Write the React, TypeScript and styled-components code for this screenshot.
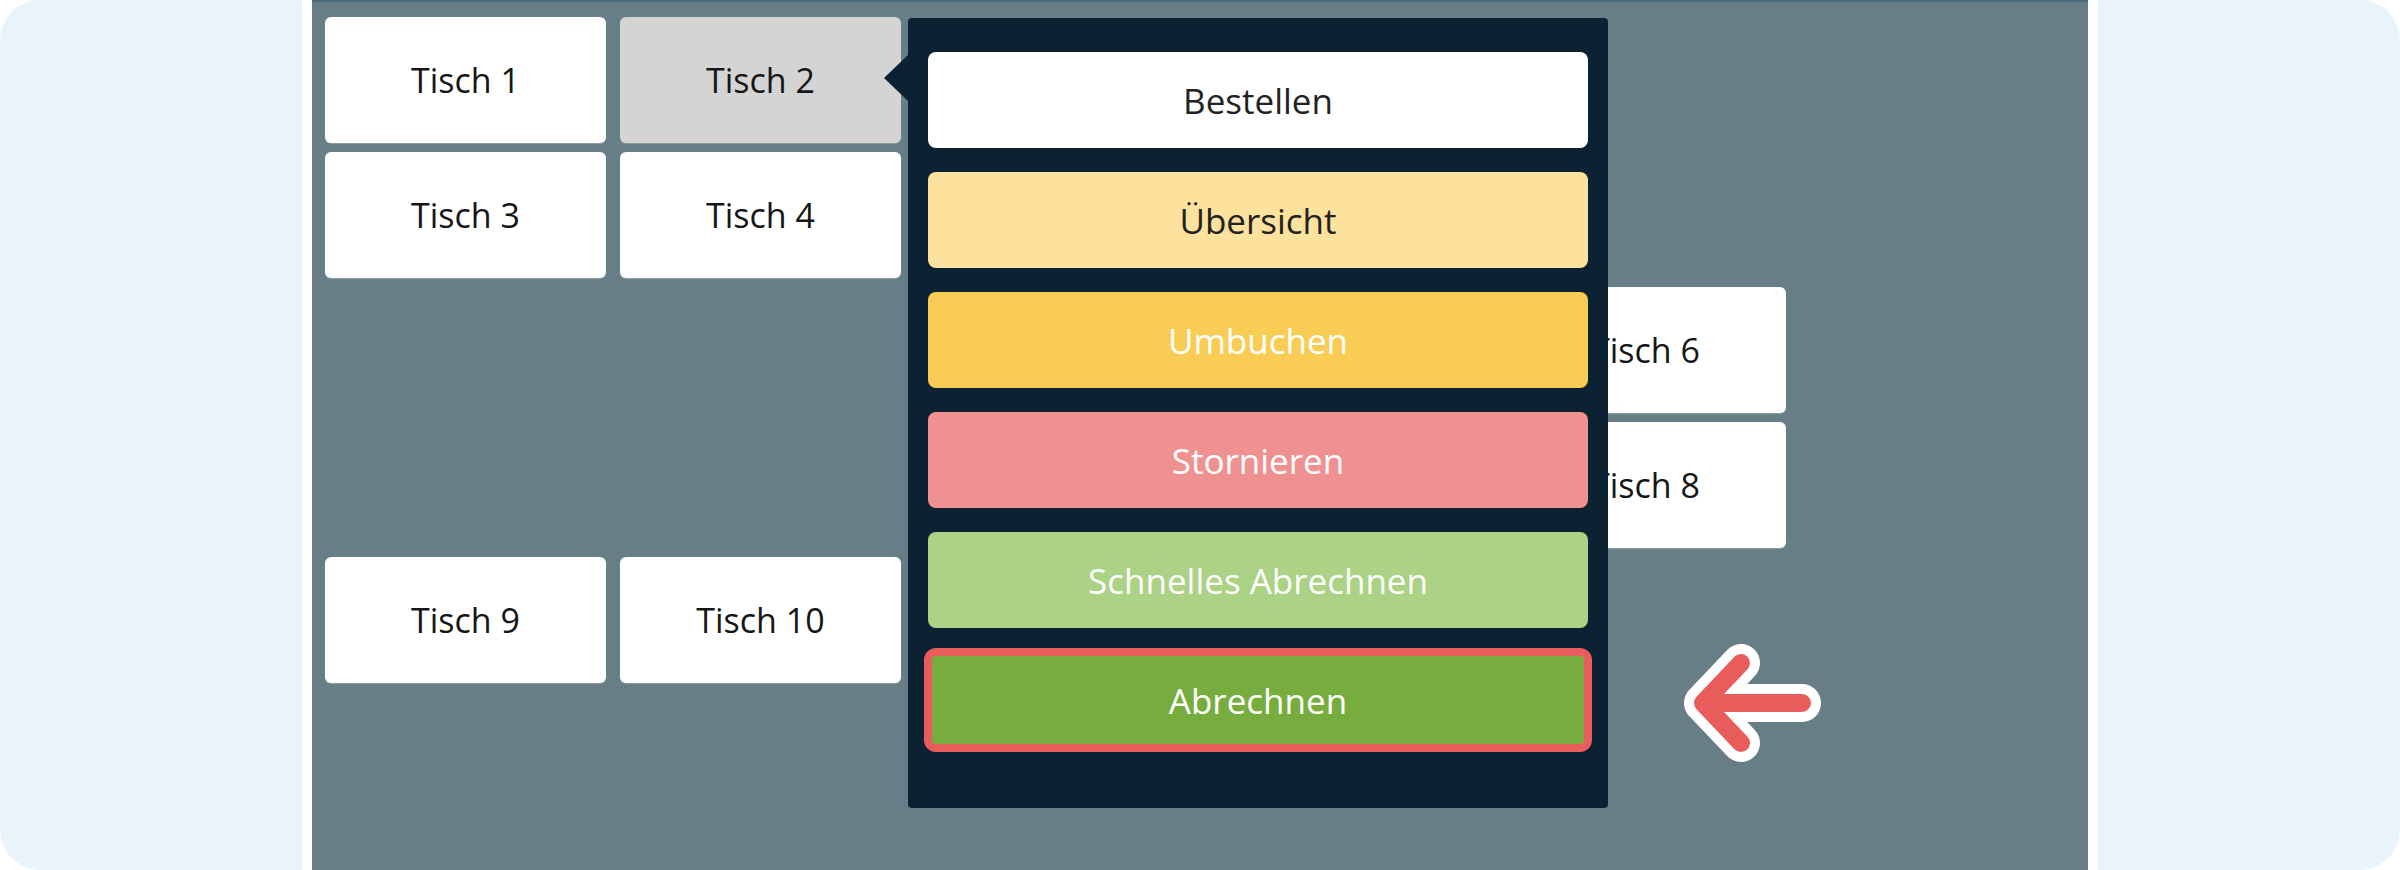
import styled, { createGlobalStyle } from "styled-components";

const GlobalStyle = createGlobalStyle`
  html, body {
    margin: 0;
    padding: 0;
    background: #ffffff;
  }
  body {
    font-family: "Open Sans", "Noto Sans", sans-serif;
  }
`;

const Frame = styled.div`
  width: 2400px;
  height: 870px;
  background: #e8f3fa;
  border-radius: 40px;
  display: flex;
  justify-content: center;
  overflow: hidden;
`;

const Column = styled.div`
  width: 1776px;
  height: 870px;
  padding: 0 10px;
  background: #ffffff;
`;

const Stage = styled.div`
  position: relative;
  height: 100%;
  box-sizing: border-box;
  background: #687e86;
  border-top: 2px solid #4b6b7d;
  padding: 15px 0 0 13px;
`;

const FloorPlan = styled.div`
  display: grid;
  grid-template-columns: repeat(5, 281px);
  grid-auto-rows: 126px;
  column-gap: 14px;
  row-gap: 9px;
`;

const Table = styled.div<{ $row: number; $col: number; $selected?: boolean }>`
  grid-row: ${(p) => p.$row};
  grid-column: ${(p) => p.$col};
  display: flex;
  align-items: center;
  justify-content: center;
  background: ${(p) => (p.$selected ? "#d4d4d4" : "#ffffff")};
  border-radius: 6px;
  box-shadow: 0 1px 1px rgba(255, 255, 255, 0.25);
  font-size: 34px;
  color: #161616;
`;

const Popup = styled.div`
  position: absolute;
  left: 596px;
  top: 16px;
  width: 700px;
  height: 790px;
  box-sizing: border-box;
  background: #0c2233;
  border-radius: 4px;
  padding: 34px 20px;
  display: flex;
  flex-direction: column;
  gap: 24px;

  &::before {
    content: "";
    position: absolute;
    left: -24px;
    top: 37px;
    border-right: 24px solid #0c2233;
    border-top: 23px solid transparent;
    border-bottom: 23px solid transparent;
  }
`;

const Action = styled.button<{ $bg: string; $fg: string; $highlight?: boolean }>`
  height: 96px;
  flex: none;
  box-sizing: border-box;
  border: ${(p) => (p.$highlight ? "4px solid #e95c5c" : "none")};
  box-shadow: ${(p) => (p.$highlight ? "0 0 0 4px #e95c5c" : "none")};
  border-radius: 8px;
  background: ${(p) => p.$bg};
  color: ${(p) => p.$fg};
  font-family: "Open Sans", "Noto Sans", sans-serif;
  font-size: 35px;
  font-weight: 400;
  padding: 0;
  cursor: pointer;
`;

const Pointer = styled.svg`
  position: absolute;
  left: 1356px;
  top: 626px;
  width: 164px;
  height: 144px;
`;

// Tisch 5 and 7 sit under the open popup and are not visible
const tables = [
  { name: "Tisch 1", row: 1, col: 1 },
  { name: "Tisch 2", row: 1, col: 2, selected: true },
  { name: "Tisch 3", row: 2, col: 1 },
  { name: "Tisch 4", row: 2, col: 2 },
  { name: "Tisch 6", row: 3, col: 5 },
  { name: "Tisch 8", row: 4, col: 5 },
  { name: "Tisch 9", row: 5, col: 1 },
  { name: "Tisch 10", row: 5, col: 2 },
];

const actions = [
  { label: "Bestellen", bg: "#ffffff", fg: "#222222" },
  { label: "Übersicht", bg: "#fce29c", fg: "#222222" },
  { label: "Umbuchen", bg: "#f9cc55", fg: "#ffffff" },
  { label: "Stornieren", bg: "#ef9190", fg: "#ffffff" },
  { label: "Schnelles Abrechnen", bg: "#abd285", fg: "#ffffff" },
  { label: "Abrechnen", bg: "#77ad3e", fg: "#ffffff", highlight: true },
];

const arrowPath = "M134 75 H35 M73 35 L35 75 L73 115";

const App = () => {
  return (
    <>
      <GlobalStyle />
      <Frame>
        <Column>
          <Stage>
            <FloorPlan>
              {tables.map((t) => (
                <Table key={t.name} $row={t.row} $col={t.col} $selected={t.selected}>
                  {t.name}
                </Table>
              ))}
            </FloorPlan>

            <Popup>
              {actions.map((a) => (
                <Action key={a.label} $bg={a.bg} $fg={a.fg} $highlight={a.highlight}>
                  {a.label}
                </Action>
              ))}
            </Popup>

            <Pointer viewBox="0 0 164 144">
              <path d={arrowPath} fill="none" stroke="#ffffff" strokeWidth="38" strokeLinecap="round" strokeLinejoin="round" />
              <path d={arrowPath} fill="none" stroke="#e95c5c" strokeWidth="18" strokeLinecap="round" strokeLinejoin="round" />
            </Pointer>
          </Stage>
        </Column>
      </Frame>
    </>
  );
};

export default App;
